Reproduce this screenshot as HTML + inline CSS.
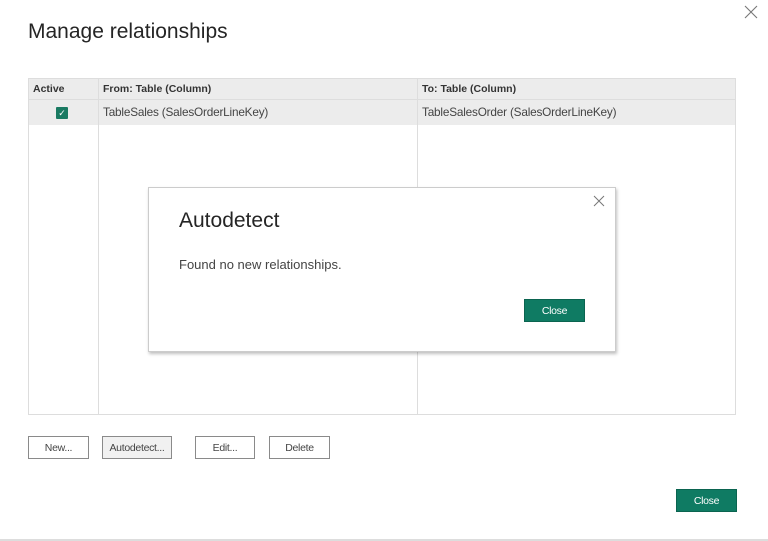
<!DOCTYPE html><html><head><style>
body{margin:0;width:768px;height:541px;background:#fff;font-family:"Liberation Sans",sans-serif;position:relative;overflow:hidden;color:#333}
.a{position:absolute}
.btn{position:absolute;border:1px solid #8a8a8a;background:#fff;font-size:10.5px;color:#444;text-align:center;box-sizing:border-box;height:23px;line-height:22px;letter-spacing:-0.3px}
.g{background:#0f7b63;border:1px solid #0b6450;color:#fff}
</style></head><body>
<div class="a" style="left:0;right:0;top:539px;height:2px;background:#ddd"></div>
<svg class="a" style="left:744px;top:5px" width="14" height="14"><path d="M1 1L13 13M13 1L1 13" stroke="#777" stroke-width="1.1"/></svg>
<div class="a" style="left:28px;top:20px;font-size:21px;color:#252525">Manage relationships</div>
<div class="a" style="left:28px;top:78px;width:708px;height:337px;border:1px solid #ddd;box-sizing:border-box"></div>
<div class="a" style="left:29px;top:79px;width:706px;height:20px;background:#ececec;border-bottom:1px solid #ddd"></div>
<div class="a" style="left:29px;top:100px;width:706px;height:25px;background:#ececec"></div>
<div class="a" style="left:98px;top:79px;width:1px;height:335px;background:#ddd"></div>
<div class="a" style="left:417px;top:79px;width:1px;height:335px;background:#ddd"></div>
<div class="a" style="left:33px;top:83px;font-size:10.5px;font-weight:bold;color:#333">Active</div>
<div class="a" style="left:103px;top:83px;font-size:10.5px;font-weight:bold;color:#333">From: Table (Column)</div>
<div class="a" style="left:422px;top:83px;font-size:10.5px;font-weight:bold;color:#333">To: Table (Column)</div>
<div class="a" style="left:56px;top:107px;width:12px;height:12px;background:#1a7a62;border-radius:1px;color:#fff;font-size:9px;line-height:12px;text-align:center">✓</div>
<div class="a" style="left:103px;top:105px;font-size:11.8px;color:#444;letter-spacing:-0.2px">TableSales (SalesOrderLineKey)</div>
<div class="a" style="left:422px;top:105px;font-size:11.8px;color:#444;letter-spacing:-0.2px">TableSalesOrder (SalesOrderLineKey)</div>
<div class="a" style="left:148px;top:187px;width:468px;height:165px;background:#fff;border:1px solid #ccc;box-sizing:border-box;box-shadow:1px 2px 3px rgba(0,0,0,.25)"></div>
<svg class="a" style="left:593px;top:195px" width="12" height="12"><path d="M1 1L11 11M11 1L1 11" stroke="#777" stroke-width="1"/></svg>
<div class="a" style="left:179px;top:209px;font-size:21px;color:#252525">Autodetect</div>
<div class="a" style="left:179px;top:257px;font-size:13px;color:#444">Found no new relationships.</div>
<div class="btn g" style="left:524px;top:299px;width:61px;line-height:23px">Close</div>
<div class="btn" style="left:28px;top:436px;width:61px">New...</div>
<div class="btn" style="left:102px;top:436px;width:70px;background:#f1f1f1">Autodetect...</div>
<div class="btn" style="left:195px;top:436px;width:60px">Edit...</div>
<div class="btn" style="left:269px;top:436px;width:61px">Delete</div>
<div class="btn g" style="left:676px;top:489px;width:61px;line-height:23px">Close</div>
</body></html>
